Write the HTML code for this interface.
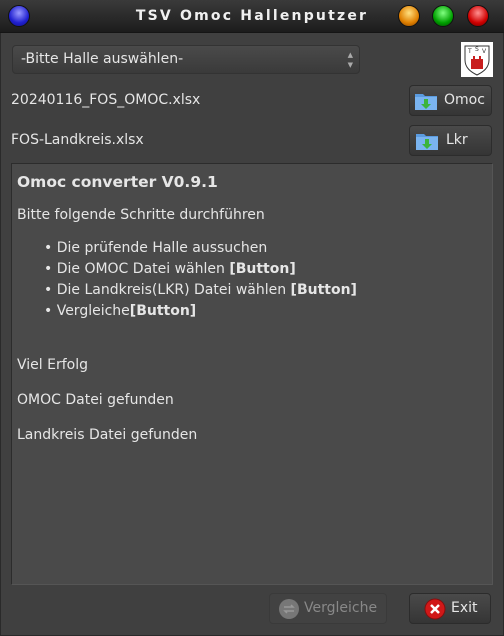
<!DOCTYPE html>
<html><head><meta charset="utf-8"><style>
*{margin:0;padding:0;box-sizing:border-box}
body{width:504px;height:636px;background:#404040;font-family:"DejaVu Sans","Liberation Sans",sans-serif;font-size:13px;color:#e6e6e6;position:relative;overflow:hidden}
.frame{position:absolute;left:0;top:0;width:504px;height:636px;border:1px solid #2a2a2a;border-top:none}
.title{position:absolute;left:0;top:0;width:504px;height:33px;background:linear-gradient(#3a3a3a,#1c1c1c);border-bottom:1px solid #151515}
.title span{position:absolute;left:0;width:504px;text-align:center;top:8px;font-weight:bold;font-size:14px;letter-spacing:2.2px;color:#f0f0f0}
.orb{position:absolute;top:5px;width:22px;height:22px;border-radius:50%;border:1px solid #111}
.combo{position:absolute;left:12px;top:45px;width:348px;height:29px;border-radius:4px;background:linear-gradient(#4a4a4a,#3a3a3a);border:1px solid #333;}
.combo span{position:absolute;left:8px;top:5px;font-size:14px}
.combo i{position:absolute;right:6px;font-style:normal;font-size:7px;color:#aaa}
.lbl{position:absolute;left:11px;font-size:14px}
.btn{position:absolute;border-radius:4px;background:linear-gradient(#4a4a4a,#353535);border:1px solid #2c2c2c;font-size:14px}
.box{position:absolute;left:11px;top:163px;width:482px;height:422px;background:#4a4a4a;border-left:1px solid #2c2c2c;border-top:1px solid #2c2c2c;border-bottom:1px solid #555;border-right:1px solid #555}
.box div{position:absolute;left:5px;white-space:nowrap;font-size:14px}
</style></head><body>
<div class="frame"></div>
<div class="title"><span>TSV Omoc Hallenputzer</span>
<div class="orb" style="left:8px;background:radial-gradient(circle at 50% 35%,#9a9aff,#2020d0 60%,#101080)"></div>
<div class="orb" style="left:398px;background:radial-gradient(circle at 50% 35%,#ffe080,#e08000 60%,#804000)"></div>
<div class="orb" style="left:432px;background:radial-gradient(circle at 50% 35%,#80ff80,#00a000 60%,#004000)"></div>
<div class="orb" style="left:467px;background:radial-gradient(circle at 50% 35%,#ff9090,#d00000 60%,#600000)"></div>
</div>
<div class="combo"><span>-Bitte Halle auswählen-</span><i style="top:5px">▲</i><i style="top:15px">▼</i></div>
<svg style="position:absolute;left:461px;top:42px" width="32" height="35" viewBox="0 0 32 35"><rect width="32" height="35" fill="#fff"/><path d="M4 4h24v14c0 8-6 12-12 15C10 30 4 26 4 18z" fill="#fff" stroke="#333" stroke-width="1"/><text x="7" y="11" font-size="6" fill="#333">T</text><text x="14" y="9" font-size="6" fill="#333">S</text><text x="21" y="11" font-size="6" fill="#333">V</text><path d="M10 27V17h2v-3h2v3h4v-3h2v3h2v10z" fill="#c81e1e"/></svg>
<div class="lbl" style="top:92px">20240116_FOS_OMOC.xlsx</div>
<div class="lbl" style="top:132px">FOS-Landkreis.xlsx</div>
<div class="btn" style="left:409px;top:85px;width:83px;height:31px">
<svg style="position:absolute;left:4px;top:5px" width="24" height="20"><path d="M1 3h8l2 2h12v14H1z" fill="#5a9be0"/><rect x="1" y="6" width="22" height="13" fill="#7ab4f0"/><path d="M10 8h4v5h3l-5 5-5-5h3z" fill="#3cb43c"/></svg>
<span style="position:absolute;left:34px;top:6px">Omoc</span></div>
<div class="btn" style="left:409px;top:125px;width:83px;height:31px">
<svg style="position:absolute;left:5px;top:5px" width="24" height="20"><path d="M1 3h8l2 2h12v14H1z" fill="#5a9be0"/><rect x="1" y="6" width="22" height="13" fill="#7ab4f0"/><path d="M10 8h4v5h3l-5 5-5-5h3z" fill="#3cb43c"/></svg>
<span style="position:absolute;left:36px;top:6px">Lkr</span></div>
<div class="box">
<div style="top:9px;font-weight:bold;font-size:15.5px">Omoc converter V0.9.1</div>
<div style="top:43px">Bitte folgende Schritte durchführen</div>
<div style="top:76px;left:32px">• Die prüfende Halle aussuchen</div>
<div style="top:97px;left:32px">• Die OMOC Datei wählen <b>[Button]</b></div>
<div style="top:118px;left:32px">• Die Landkreis(LKR) Datei wählen <b>[Button]</b></div>
<div style="top:139px;left:32px">• Vergleiche<b>[Button]</b></div>
<div style="top:193px">Viel Erfolg</div>
<div style="top:228px">OMOC Datei gefunden</div>
<div style="top:263px">Landkreis Datei gefunden</div>
</div>
<div class="btn" style="left:269px;top:593px;width:118px;height:31px;background:#424242;border-color:#3a3a3a;color:#888">
<svg style="position:absolute;left:8px;top:4px" width="22" height="22"><circle cx="11" cy="11" r="10" fill="#777"/><path d="M6 9h9l-2-2M16 13H7l2 2" stroke="#999" stroke-width="1.5" fill="none"/></svg>
<span style="position:absolute;left:34px;top:6px">Vergleiche</span></div>
<div class="btn" style="left:409px;top:593px;width:82px;height:31px">
<svg style="position:absolute;left:14px;top:4px" width="22" height="22"><circle cx="11" cy="11" r="10" fill="#d01818" stroke="#801010"/><path d="M7 7l8 8M15 7l-8 8" stroke="#fff" stroke-width="2.5"/></svg>
<span style="position:absolute;left:41px;top:6px">Exit</span></div>
</body></html>
